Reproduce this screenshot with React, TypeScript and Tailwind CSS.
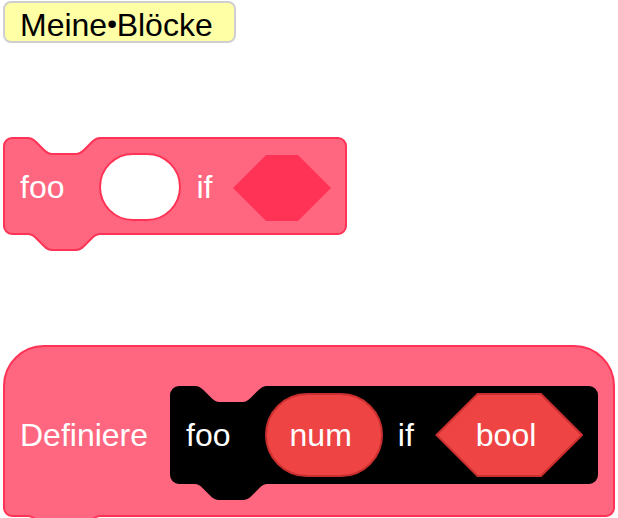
import type { ReactNode } from "react";

type Tone = "pink" | "black";

const blockTone: Record<Tone, string> = {
  pink: "border-[#ff3355] bg-[#ff6680]",
  black: "border-black bg-black",
};

const notchTone: Record<Tone, string> = {
  pink: "fill-[#ff6680] stroke-[#ff3355]",
  black: "fill-black stroke-black",
};

const NOTCH =
  "c4 0 6 2 8 4 l8 8 c2 2 4 4 8 4 h24 c4 0 6 -2 8 -4 l8 -8 c2 -2 4 -4 8 -4";

/* Dent in the top edge, filled with whatever lies behind the block. */
function TopNotch({ className }: { className: string }) {
  return (
    <svg
      className={`absolute -top-[2px] left-[23px] ${className}`}
      width="72"
      height="19"
      viewBox="0 0 72 19"
      strokeWidth="2"
      aria-hidden="true"
    >
      <path stroke="none" d={`M0 0 V1 ${NOTCH} V0 Z`} />
      <path fill="none" d={`M0 1 ${NOTCH}`} />
    </svg>
  );
}

/* Tab that hangs below the bottom edge. */
function BottomNotch({ tone }: { tone: Tone }) {
  return (
    <svg
      className={`absolute -bottom-[18px] left-[23px] ${notchTone[tone]}`}
      width="72"
      height="19"
      viewBox="0 0 72 19"
      strokeWidth="2"
      aria-hidden="true"
    >
      <path stroke="none" d={`M0 0 V2 ${NOTCH} V0 Z`} />
      <path fill="none" d={`M0 2 ${NOTCH}`} />
    </svg>
  );
}

function Block({
  tone,
  notch,
  className,
  children,
}: {
  tone: Tone;
  notch: string;
  className: string;
  children: ReactNode;
}) {
  return (
    <div
      className={`relative flex w-max items-center rounded-[9px] border-2 ${blockTone[tone]} ${className}`}
    >
      <TopNotch className={notch} />
      {children}
      <BottomNotch tone={tone} />
    </div>
  );
}

export default function App() {
  return (
    <main className="flex h-screen flex-col items-start overflow-hidden bg-white pt-px pl-[3px] font-['Liberation_Sans',Arial,sans-serif] text-[32px] leading-9 text-white">
      <h1 className="shrink-0 rounded-lg border-2 border-[#cfcfd1] bg-[#ffffa5] pt-[6px] pr-[21px] pl-[15px] leading-8 text-black">
        Meine<span className="-mx-px font-[Roboto,sans-serif] font-bold">•</span>Blöcke
      </h1>

      <Block
        tone="pink"
        notch="fill-white stroke-[#ff3355]"
        className="mt-[94px] shrink-0 pt-[14px] pr-[14px] pb-3 pl-[15px]"
      >
        <label htmlFor="foo-num">foo</label>
        <input
          id="foo-num"
          type="text"
          className="ml-[35px] h-[68px] w-[82px] rounded-full border-2 border-[#ff3355] bg-white px-4 text-center text-[#575e75] outline-none"
        />
        <span className="ml-[15px]">if</span>
        <svg
          className="ml-[21px] fill-[#ff3355]"
          width="98"
          height="68"
          viewBox="0 0 98 68"
          aria-hidden="true"
        >
          <path d="M0 35 L33 2 H65 L98 35 L65 68 H33 Z" />
        </svg>
      </Block>

      <div className="relative mt-[110px] flex w-max shrink-0 items-center rounded-t-[41px] rounded-b-[9px] border-2 border-[#ff3355] bg-[#ff6680] pt-[39px] pr-[15px] pb-[31px] pl-[15px]">
        <span>Definiere</span>
        <Block
          tone="black"
          notch="fill-[#ff6680] stroke-black"
          className="ml-[22px] py-[5px] pr-[13px] pl-[14px]"
        >
          <span>foo</span>
          <span className="ml-[34px] rounded-full border-2 border-[#c92f2f] bg-[#ee4444] py-[22px] pr-[29px] pl-[23px]">
            num
          </span>
          <span className="ml-[15px]">if</span>
          <span className="relative ml-[21px] py-6 pr-[47px] pl-[41px]">
            <svg
              className="absolute inset-0 fill-[#ee4444] stroke-[#c92f2f]"
              width="148"
              height="84"
              viewBox="0 0 148 84"
              strokeWidth="2"
              aria-hidden="true"
            >
              <path d="M1.5 42 L42.5 1 H106 L147 42 L106 83 H42.5 Z" />
            </svg>
            <span className="relative">bool</span>
          </span>
        </Block>
        <BottomNotch tone="pink" />
      </div>
    </main>
  );
}
